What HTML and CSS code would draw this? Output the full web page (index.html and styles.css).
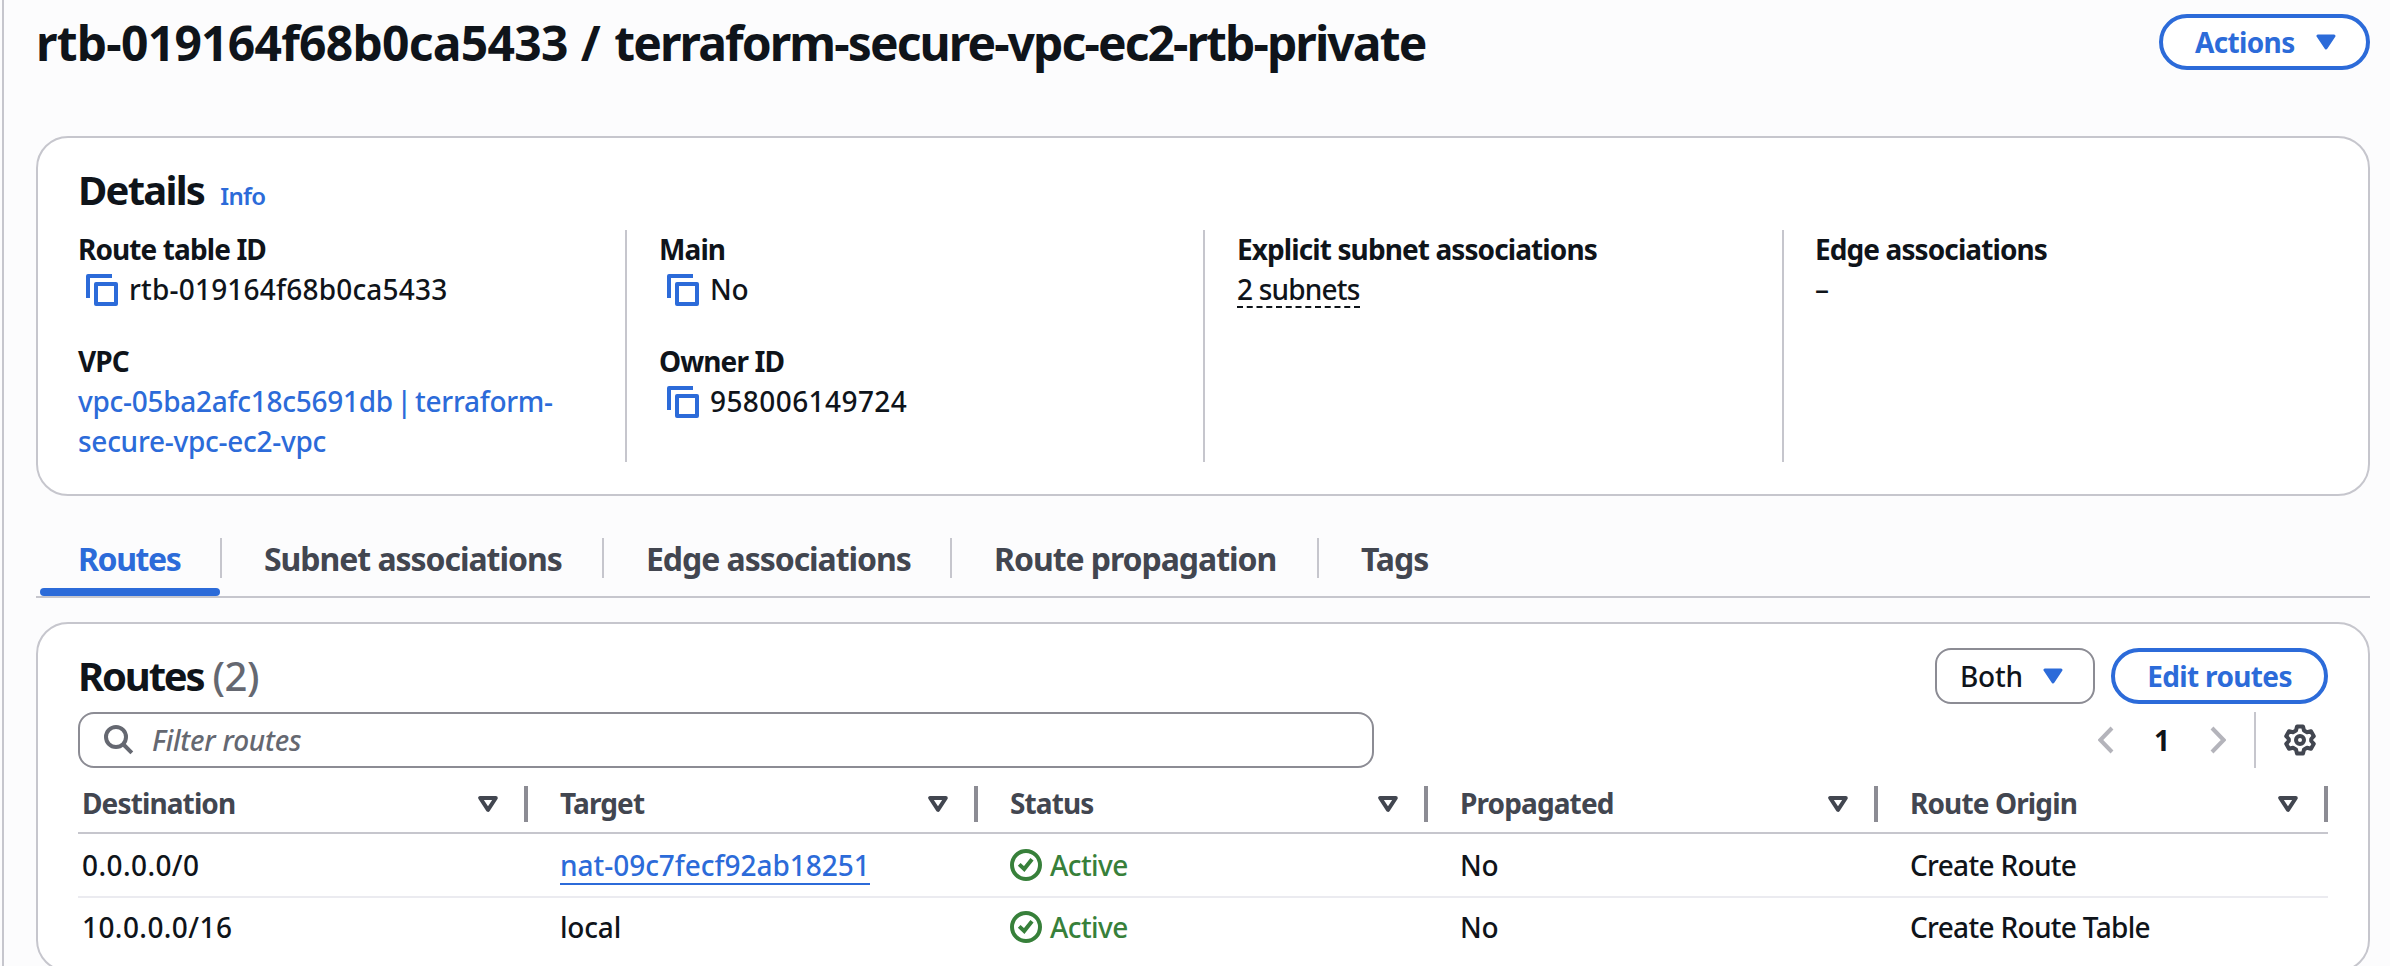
FILE: index.html
```
<!DOCTYPE html>
<html lang="en">
<head>
<meta charset="utf-8">
<title>Route table details</title>
<link rel="stylesheet" href="styles.css">
</head>
<body>
<svg class="sprite" aria-hidden="true">
  <symbol id="copy" viewBox="0 0 32 32"><path d="M2 24V2H26M10 10H30V30H10Z" fill="none" stroke="currentColor" stroke-width="4" stroke-linejoin="round"/></symbol>
  <symbol id="caret" viewBox="0 0 20 16"><path d="M2 2H18L10 14Z" fill="currentColor" stroke="currentColor" stroke-width="3" stroke-linejoin="round"/></symbol>
  <symbol id="sort" viewBox="0 0 20 16"><path d="M2.2 2H17.8L10 13.8Z" fill="none" stroke="currentColor" stroke-width="4" stroke-linejoin="round"/></symbol>
  <symbol id="check" viewBox="0 0 32 32"><g fill="none" stroke="currentColor" stroke-width="4"><circle cx="16" cy="16" r="14"/><path d="M9.2 15.4L14.2 20L22 10.2"/></g></symbol>
</svg>
<main class="page">
  <header class="page-head">
    <h1 class="title"><span class="title-id">rtb-019164f68b0ca5433</span><span class="title-sep"> / </span><span class="title-name">terraform-secure-vpc-ec2-rtb-private</span></h1>
    <button class="btn btn-actions">Actions<svg class="caret"><use href="#caret"/></svg></button>
  </header>

  <section class="card details">
    <div class="details-head"><h2>Details</h2><a class="info">Info</a></div>
    <div class="details-grid">
      <div class="col">
        <dl class="pair"><dt>Route table ID</dt><dd class="copyable"><svg class="icon"><use href="#copy"/></svg><span class="rtb">rtb-019164f68b0ca5433</span></dd></dl>
        <dl class="pair"><dt>VPC</dt><dd><a class="link">vpc-05ba2afc18c5691db | terraform-secure-vpc-ec2-vpc</a></dd></dl>
      </div>
      <div class="col">
        <dl class="pair"><dt>Main</dt><dd class="copyable"><svg class="icon"><use href="#copy"/></svg><span>No</span></dd></dl>
        <dl class="pair"><dt>Owner ID</dt><dd class="copyable"><svg class="icon"><use href="#copy"/></svg><span class="wide">958006149724</span></dd></dl>
      </div>
      <div class="col">
        <dl class="pair"><dt>Explicit subnet associations</dt><dd><span class="popover-link">2 subnets</span></dd></dl>
      </div>
      <div class="col">
        <dl class="pair"><dt>Edge associations</dt><dd>–</dd></dl>
      </div>
    </div>
  </section>

  <nav class="tabs">
    <a class="tab tab-routes active">Routes</a>
    <a class="tab tab-subnets">Subnet associations</a>
    <a class="tab tab-edges">Edge associations</a>
    <a class="tab tab-propagation">Route propagation</a>
    <a class="tab tab-tags">Tags</a>
  </nav>

  <section class="card routes">
    <div class="routes-head">
      <h2>Routes <span class="count">(2)</span></h2>
      <button class="select">Both<svg class="caret"><use href="#caret"/></svg></button>
      <button class="btn btn-edit">Edit routes</button>
    </div>
    <div class="toolbar">
      <label class="search">
        <svg class="search-icon" viewBox="0 0 30 30"><g fill="none" stroke="currentColor" stroke-width="4"><circle cx="12" cy="12" r="10"/><path d="M19 19L27.8 27.8"/></g></svg>
        <span>Filter routes</span>
      </label>
      <div class="pager">
        <svg class="chev" viewBox="0 0 16 28"><path d="M14 2L2.4 14L14 26" fill="none" stroke="currentColor" stroke-width="4"/></svg>
        <span class="page-no">1</span>
        <svg class="chev" viewBox="0 0 16 28"><path d="M2 2L13.6 14L2 26" fill="none" stroke="currentColor" stroke-width="4"/></svg>
      </div>
      <div class="prefs">
        <svg class="icon" viewBox="0 0 32 32"><g fill="none" stroke="currentColor" stroke-width="4" stroke-linejoin="round"><circle cx="16" cy="16" r="4"/><path d="M13 2.5H19L20 6.5L23 8.2L27 7.2L29.8 12.2L27.2 15V17L29.8 19.8L27 24.8L23 23.8L20 25.5L19 29.5H13L12 25.5L9 23.8L5 24.8L2.2 19.8L4.8 17V15L2.2 12.2L5 7.2L9 8.2L12 6.5Z"/></g></svg>
      </div>
    </div>
    <div class="table">
      <div class="row head">
        <div class="cell">Destination<svg class="sort"><use href="#sort"/></svg></div>
        <div class="cell">Target<svg class="sort"><use href="#sort"/></svg></div>
        <div class="cell">Status<svg class="sort"><use href="#sort"/></svg></div>
        <div class="cell">Propagated<svg class="sort"><use href="#sort"/></svg></div>
        <div class="cell">Route Origin<svg class="sort"><use href="#sort"/></svg></div>
      </div>
      <div class="row">
        <div class="cell wide">0.0.0.0/0</div>
        <div class="cell"><a class="nat-link">nat-09c7fecf92ab18251</a></div>
        <div class="cell status"><svg class="icon"><use href="#check"/></svg>Active</div>
        <div class="cell">No</div>
        <div class="cell origin">Create Route</div>
      </div>
      <div class="row last">
        <div class="cell wide">10.0.0.0/16</div>
        <div class="cell">local</div>
        <div class="cell status"><svg class="icon"><use href="#check"/></svg>Active</div>
        <div class="cell">No</div>
        <div class="cell origin">Create Route Table</div>
      </div>
    </div>
  </section>
</main>
</body>
</html>
```

FILE: styles.css
```
:root {
  --blue: #2c6bd9;
  --text: #0f141a;
  --muted: #424650;
  --line: #c6c6cd;
  --control: #8c8c94;
}
* { box-sizing: border-box; }
html, body { height: 100%; }
body {
  margin: 0;
  overflow: hidden;
  background: #fcfcfd;
  color: var(--text);
  font: 500 28px/40px "Noto Sans", "Open Sans", sans-serif;
  letter-spacing: -0.2px;
}
h1, h2, dl, dt, dd { margin: 0; }
button { font: inherit; letter-spacing: inherit; padding: 0; margin: 0; }
svg { display: block; flex: none; }
.sprite { display: none; }
.icon { width: 32px; height: 32px; }
.caret, .sort { width: 20px; height: 16px; }
.wide { letter-spacing: 0.42px; }
.rtb { letter-spacing: 0.2px; }

.page {
  height: 966px;
  margin-left: 2px;
  padding: 0 20px 0 32px;
  border-left: 2px solid var(--line);
  overflow: hidden;
}
.page-head {
  display: flex;
  justify-content: space-between;
  align-items: flex-start;
  height: 136px;
  padding-top: 14px;
}
.title { padding-top: 1px; font-size: 48px; line-height: 56px; font-weight: 700; white-space: pre; }
.title-id { letter-spacing: -0.75px; }
.title-sep { letter-spacing: 0.6px; }
.title-name { letter-spacing: -1.9px; }

.btn {
  display: flex;
  align-items: center;
  height: 56px;
  border: 4px solid var(--blue);
  border-radius: 28px;
  background: #fff;
  color: var(--blue);
  font-weight: 700;
  letter-spacing: -0.65px;
}
.btn-actions { width: 211px; padding: 0 30px 0 32px; justify-content: space-between; }
.btn-edit { width: 217px; justify-content: center; }

.card {
  background: #fff;
  border: 2px solid var(--line);
  border-radius: 32px;
  padding: 0 40px;
}
h2 { font-size: 40px; line-height: 48px; font-weight: 700; letter-spacing: -1.75px; }

.details { height: 360px; padding-top: 28px; }
.details-head { display: flex; align-items: baseline; gap: 16px; height: 64px; }
.info { color: var(--blue); font-size: 24px; font-weight: 600; letter-spacing: -0.7px; }
.details-grid {
  display: grid;
  grid-template-columns: 547px 578px 579px 1fr;
  height: 232px;
}
.col { display: flex; flex-direction: column; gap: 32px; padding-right: 32px; }
.col + .col { border-left: 2px solid var(--line); padding-left: 32px; }
.col:last-child { padding-left: 31px; }
.pair:first-child { margin-top: -1px; }
.pair dt { font-weight: 700; letter-spacing: -0.9px; }
.copyable { display: flex; align-items: center; gap: 11px; padding-left: 8px; }
.copyable .icon { margin-top: 2px; color: var(--blue); }
.link { color: var(--blue); letter-spacing: -0.27px; word-spacing: -3.5px; }
.popover-link {
  display: inline-block;
  height: 39px;
  letter-spacing: -0.8px;
  border-bottom: 2px dashed var(--text);
}

.tabs {
  display: flex;
  height: 76px;
  margin: 26px 0 24px;
  border-bottom: 2px solid var(--line);
  color: var(--muted);
  font-size: 32px;
  font-weight: 700;
  letter-spacing: -1.05px;
}
.tab { position: relative; padding-left: 42px; height: 74px; line-height: 40px; padding-top: 17px; }
.tab:not(:last-child)::after {
  content: "";
  position: absolute;
  right: 0;
  top: 16px;
  width: 2px;
  height: 40px;
  background: var(--line);
}
.tab-routes { width: 186px; }
.tab-subnets { width: 382px; }
.tab-edges { width: 348px; }
.tab-propagation { width: 367px; }
.tab.active { color: var(--blue); letter-spacing: -1.4px; }
.tab.active::before {
  content: "";
  position: absolute;
  left: 4px;
  right: 2px;
  bottom: 0;
  height: 8px;
  border-radius: 4px;
  background: var(--blue);
}

.routes { height: 350px; padding-top: 24px; }
.routes-head { display: flex; height: 64px; }
.routes-head h2 { flex: 1; padding-top: 4px; letter-spacing: -2.2px; }
.count { color: #656871; font-weight: 500; letter-spacing: -0.5px; margin-left: 1px; }
.select {
  display: flex;
  align-items: center;
  justify-content: space-between;
  width: 160px;
  height: 56px;
  margin-right: 16px;
  padding: 0 30px 0 23px;
  border: 2px solid var(--control);
  border-radius: 16px;
  background: #fff;
  color: var(--text);
}
.select .caret { color: var(--blue); }

.toolbar { display: flex; height: 56px; }
.search {
  display: flex;
  align-items: center;
  gap: 18px;
  width: 1296px;
  padding-left: 24px;
  border: 2px solid var(--control);
  border-radius: 16px;
  color: #656871;
  font-style: italic;
}
.search-icon { width: 30px; height: 30px; }
.pager { display: flex; align-items: center; justify-content: space-between; width: 128px; margin-left: auto; color: #b4b4bb; }
.chev { width: 16px; height: 28px; }
.page-no { color: var(--text); font-weight: 700; }
.prefs {
  display: flex;
  align-items: center;
  width: 74px;
  margin-left: 28px;
  padding-left: 28px;
  border-left: 2px solid var(--line);
  color: var(--muted);
}

.row {
  display: grid;
  grid-template-columns: repeat(5, 450px);
  height: 64px;
  border-bottom: 2px solid #ebebf0;
}
.row.last { height: 58px; border-bottom: 0; }
.cell { display: flex; align-items: center; padding-left: 32px; }
.cell:first-child { padding-left: 4px; }
.row.head { height: 66px; padding: 18px 0 10px; border-bottom-color: var(--line); color: var(--muted); font-weight: 700; letter-spacing: -0.88px; }
.head .cell { height: 36px; line-height: 32px; justify-content: space-between; padding-right: 26px; padding-bottom: 2px; border-right: 4px solid var(--control); }
.sort { margin-top: 2px; }
.nat-link {
  display: block;
  height: 40px;
  color: var(--blue);
  letter-spacing: -0.03px;
  box-shadow: inset 0 -2px 0 var(--blue);
}
.status { gap: 8px; color: #37803a; letter-spacing: -0.6px; }
.origin { letter-spacing: -0.68px; }
```
